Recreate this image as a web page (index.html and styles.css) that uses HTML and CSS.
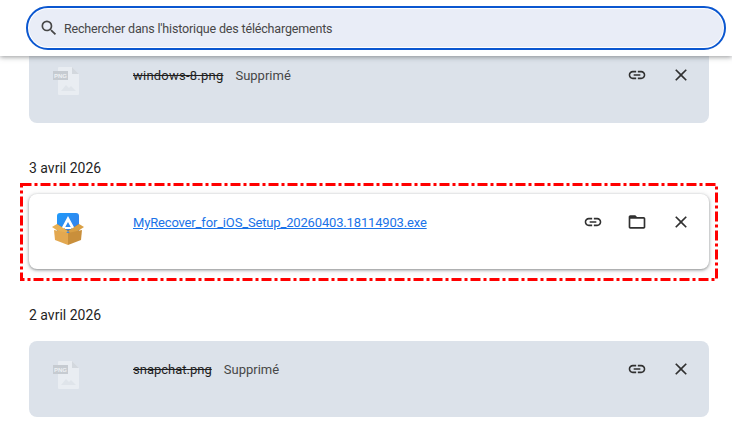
FILE: index.html
```html
<!DOCTYPE html>
<html lang="fr">
<head>
<meta charset="utf-8">
<title>Téléchargements</title>
<link rel="stylesheet" href="styles.css">
</head>
<body>
<svg class="defs" width="0" height="0" aria-hidden="true">
  <symbol id="link" viewBox="0 0 24 24"><path d="M3.9 12c0-1.71 1.39-3.1 3.1-3.1h4V7H7c-2.76 0-5 2.24-5 5s2.24 5 5 5h4v-1.9H7c-1.71 0-3.1-1.39-3.1-3.1zM8 13h8v-2H8v2zm9-6h-4v1.9h4c1.71 0 3.1 1.39 3.1 3.1s-1.39 3.1-3.1 3.1h-4V17h4c2.76 0 5-2.24 5-5s-2.24-5-5-5z"/></symbol>
  <symbol id="close" viewBox="0 0 24 24"><path d="M19 6.41 17.59 5 12 10.59 6.41 5 5 6.41 10.59 12 5 17.59 6.41 19 12 13.41 17.59 19 19 17.59 13.41 12z"/></symbol>
  <symbol id="folder" viewBox="0 0 24 24"><path d="M10 4H4c-1.1 0-1.99.9-1.99 2L2 18c0 1.1.9 2 2 2h16c1.1 0 2-.9 2-2V8c0-1.1-.9-2-2-2h-8l-2-2zM4 8h16v10H4V8z"/></symbol>
</svg>

<header class="topbar">
  <div class="search">
    <svg class="search-icon" viewBox="0 0 24 24"><path d="M15.5 14h-.79l-.28-.27A6.47 6.47 0 0 0 16 9.5 6.5 6.5 0 1 0 9.5 16c1.61 0 3.09-.59 4.23-1.57l.27.28v.79l5 4.99L20.49 19l-4.99-5zm-6 0C7.01 14 5 11.99 5 9.5S7.01 5 9.5 5 14 7.01 14 9.5 11.99 14 9.5 14z"/></svg>
    <span class="search-text">Rechercher dans l'historique des téléchargements</span>
  </div>
</header>

<main class="list">
  <article class="card deleted">
    <svg class="file-icon" viewBox="0 0 28 30">
      <path d="M6 1h13l7 7v20a1 1 0 0 1-1 1H6a1 1 0 0 1-1-1V2a1 1 0 0 1 1-1z" fill="#e9edf2"/>
      <path d="M19 1l7 7h-7z" fill="#d3d8de"/>
      <path d="M8 25l5-6 3 3 2-2 5 5z" fill="#dfe4ea"/>
      <rect x="0" y="5" width="15" height="9" fill="#c6cbd1"/>
      <text x="7.500" y="12" class="png-label">PNG</text>
    </svg>
    <div class="info"><s class="name name-wide">windows-8.png</s><span class="status">Supprimé</span></div>
    <svg class="action"><use href="#link"/></svg>
    <svg class="action"><use href="#close"/></svg>
  </article>

  <h2 class="date date-first">3 avril 2026</h2>

  <article class="card active">
    <svg class="annotation" width="698" height="98" viewBox="0 0 698 98"><rect x="1.500" y="1.500" width="695" height="95" fill="none" stroke="#f00" stroke-width="3" stroke-dasharray="10 3 3 3"/></svg>
    <svg class="app-icon" viewBox="0 0 34 34">
      <defs><linearGradient id="appblue" x1="0" y1="0" x2="1" y2="1"><stop offset="0" stop-color="#1f9bfa"/><stop offset="1" stop-color="#3a7de8"/></linearGradient></defs>
      <rect x="6" y="1" width="22" height="20" rx="3" fill="url(#appblue)"/>
      <path d="M6 12l11 7 11-7v6H6z" fill="#8f6528"/>
      <path d="M17 4l7 13h-3.200L17 10 13.200 17H10z" fill="#fff"/>
      <path d="M14 15h6v2h-6z" fill="#fff"/>
      <path d="M1 15l5-3 11 7-4 4z" fill="#e7b055"/>
      <path d="M33 15l-5-3-11 7 4 4z" fill="#d99f44"/>
      <path d="M3 18l14 3v12L4 28z" fill="#e3a850"/>
      <path d="M31 18l-14 3v12l13-5z" fill="#c98f3b"/>
    </svg>
    <div class="info"><a class="link" href="#">MyRecover_for_iOS_Setup_20260403.18114903.exe</a></div>
    <svg class="action"><use href="#link"/></svg>
    <svg class="action"><use href="#folder"/></svg>
    <svg class="action"><use href="#close"/></svg>
  </article>

  <h2 class="date date-second">2 avril 2026</h2>

  <article class="card deleted">
    <svg class="file-icon" viewBox="0 0 28 30">
      <path d="M6 1h13l7 7v20a1 1 0 0 1-1 1H6a1 1 0 0 1-1-1V2a1 1 0 0 1 1-1z" fill="#e9edf2"/>
      <path d="M19 1l7 7h-7z" fill="#d3d8de"/>
      <path d="M8 25l5-6 3 3 2-2 5 5z" fill="#dfe4ea"/>
      <rect x="0" y="5" width="15" height="9" fill="#c6cbd1"/>
      <text x="7.500" y="12" class="png-label">PNG</text>
    </svg>
    <div class="info"><s class="name">snapchat.png</s><span class="status">Supprimé</span></div>
    <svg class="action"><use href="#link"/></svg>
    <svg class="action"><use href="#close"/></svg>
  </article>
</main>
</body>
</html>
```

FILE: styles.css
```css
* { box-sizing: border-box; }
html, body { margin: 0; height: 100%; }
body {
  background: #fff;
  font-family: Roboto, "Open Sans", sans-serif;
  color: #1f1f1f;
  overflow: hidden;
}
.defs { position: absolute; }
.png-label { font: 700 6px "Liberation Sans", sans-serif; fill: #eef1f4; text-anchor: middle; }

.topbar {
  position: absolute;
  inset: 0 0 auto 0;
  height: 56px;
  z-index: 2;
  background: #fff;
  padding: 6px 6px 0 26px;
  box-shadow: 0 1px 5px rgba(60, 64, 67, .55);
}
.search {
  height: 44px;
  display: flex;
  align-items: center;
  gap: 5px;
  padding-left: 11px;
  border: 2px solid #0b57d0;
  border-radius: 22px;
  background: #e9edf7;
  box-shadow: inset 0 0 0 1px #fff;
}
.search-icon { width: 20px; height: 20px; fill: #474747; flex: none; }
.search-text { font-size: 12.5px; letter-spacing: -.17px; color: #474747; }

.list { padding: 47px 23px 0 29px; }

.card {
  position: relative;
  display: flex;
  align-items: flex-start;
  height: 76px;
  border-radius: 8px;
  padding-top: 18px;
  padding-right: 18px;
  gap: 16px;
}
.deleted { background: #dce2ea; }
.active {
  height: 75px;
  background: #fff;
  box-shadow: 0 1px 3px rgba(60, 64, 67, .55), 0 1px 6px rgba(60, 64, 67, .15);
}
.annotation { position: absolute; left: -9px; top: -11px; pointer-events: none; }

.file-icon { width: 28px; height: 30px; margin: 1px 0 0 24px; flex: none; }
.app-icon { width: 34px; height: 34px; margin: 0 0 0 22px; flex: none; }

.info {
  flex: 1;
  display: flex;
  gap: 12px;
  margin-left: 36px;
  padding-top: 1px;
  font-size: 13px;
  line-height: 20px;
}
.app-icon + .info { margin-left: 32px; }
.name { color: #1f1f1f; }
.name-wide { letter-spacing: .23px; }
.status { color: #474747; }
.link { color: #1a73e8; letter-spacing: -.16px; }

.action { width: 20px; height: 20px; margin-left: 8px; fill: #303030; flex: none; }

.date {
  margin: 0;
  font-size: 14px;
  font-weight: 400;
  line-height: 20px;
  color: #1f1f1f;
}
.date-first { margin-top: 35px; margin-bottom: 16px; }
.date-second { margin-top: 36px; margin-bottom: 16px; }
```
